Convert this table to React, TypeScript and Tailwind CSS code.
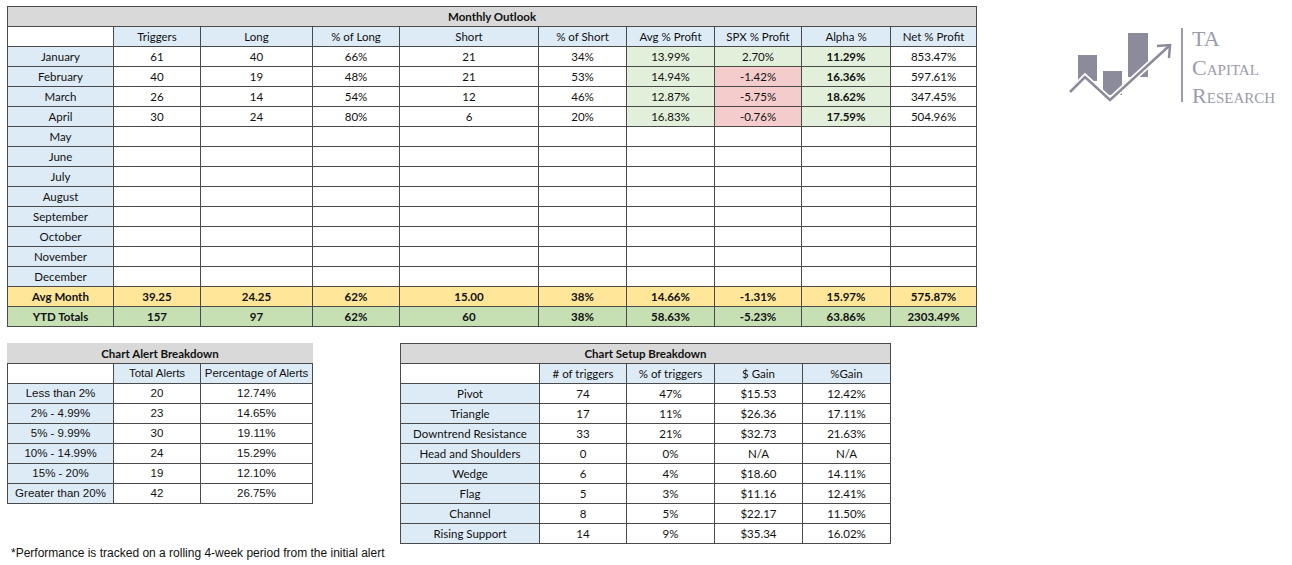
import React from "react";

type Row = {
  label: string;
  cells: string[];
};

const months: Row[] = [
  { label: "January", cells: ["61", "40", "66%", "21", "34%", "13.99%", "2.70%", "11.29%", "853.47%"] },
  { label: "February", cells: ["40", "19", "48%", "21", "53%", "14.94%", "-1.42%", "16.36%", "597.61%"] },
  { label: "March", cells: ["26", "14", "54%", "12", "46%", "12.87%", "-5.75%", "18.62%", "347.45%"] },
  { label: "April", cells: ["30", "24", "80%", "6", "20%", "16.83%", "-0.76%", "17.59%", "504.96%"] },
  { label: "May", cells: [] },
  { label: "June", cells: [] },
  { label: "July", cells: [] },
  { label: "August", cells: [] },
  { label: "September", cells: [] },
  { label: "October", cells: [] },
  { label: "November", cells: [] },
  { label: "December", cells: [] },
];

const monthHeaders = ["Triggers", "Long", "% of Long", "Short", "% of Short", "Avg % Profit", "SPX % Profit", "Alpha %", "Net % Profit"];
const monthWidths = [106, 87, 112, 87, 139, 88, 88, 87, 89, 86];

const avgRow = ["39.25", "24.25", "62%", "15.00", "38%", "14.66%", "-1.31%", "15.97%", "575.87%"];
const ytdRow = ["157", "97", "62%", "60", "38%", "58.63%", "-5.23%", "63.86%", "2303.49%"];

const alerts: Row[] = [
  { label: "Less than 2%", cells: ["20", "12.74%"] },
  { label: "2% - 4.99%", cells: ["23", "14.65%"] },
  { label: "5% - 9.99%", cells: ["30", "19.11%"] },
  { label: "10% - 14.99%", cells: ["24", "15.29%"] },
  { label: "15% - 20%", cells: ["19", "12.10%"] },
  { label: "Greater than 20%", cells: ["42", "26.75%"] },
];

const setups: Row[] = [
  { label: "Pivot", cells: ["74", "47%", "$15.53", "12.42%"] },
  { label: "Triangle", cells: ["17", "11%", "$26.36", "17.11%"] },
  { label: "Downtrend Resistance", cells: ["33", "21%", "$32.73", "21.63%"] },
  { label: "Head and Shoulders", cells: ["0", "0%", "N/A", "N/A"] },
  { label: "Wedge", cells: ["6", "4%", "$18.60", "14.11%"] },
  { label: "Flag", cells: ["5", "3%", "$11.16", "12.41%"] },
  { label: "Channel", cells: ["8", "5%", "$22.17", "11.50%"] },
  { label: "Rising Support", cells: ["14", "9%", "$35.34", "16.02%"] },
];

const cellBase = "h-[20px] p-0 border border-[#4a4a4a] text-center align-middle leading-none whitespace-nowrap";
const blue = "bg-[#ddebf7]";

// colour of a filled monthly cell, by column index
function monthCellClass(col: number, value: string) {
  if (!value) return "bg-white";
  if (col === 5) return "bg-[#e2efda]";
  if (col === 6) return value.startsWith("-") ? "bg-[#f4cccc]" : "bg-[#e2efda]";
  if (col === 7) return "bg-[#e2efda] font-bold";
  return "bg-white";
}

function MonthlyOutlook() {
  return (
    <table className="table-fixed border-collapse border border-[#2e2e2e] font-[Lato,'Open_Sans',sans-serif] text-[11.5px] text-[#111]" style={{ width: 970 }}>
      <colgroup>
        {monthWidths.map((w, i) => (
          <col key={i} style={{ width: w }} />
        ))}
      </colgroup>
      <tbody>
        <tr>
          <td colSpan={10} className={`${cellBase} bg-[#d9d9d9] font-bold`}>
            Monthly Outlook
          </td>
        </tr>
        <tr>
          <td className={`${cellBase} bg-white`}></td>
          {monthHeaders.map((h) => (
            <td key={h} className={`${cellBase} ${blue}`}>
              {h}
            </td>
          ))}
        </tr>
        {months.map((m) => (
          <tr key={m.label}>
            <td className={`${cellBase} ${blue}`}>{m.label}</td>
            {monthHeaders.map((_, i) => {
              const v = m.cells[i] ?? "";
              return (
                <td key={i} className={`${cellBase} ${monthCellClass(i, v)}`}>
                  {v}
                </td>
              );
            })}
          </tr>
        ))}
        <tr className="bg-[#ffe699] font-bold">
          <td className={cellBase}>Avg Month</td>
          {avgRow.map((v, i) => (
            <td key={i} className={cellBase}>
              {v}
            </td>
          ))}
        </tr>
        <tr className="bg-[#c6e0b4] font-bold">
          <td className={cellBase}>YTD Totals</td>
          {ytdRow.map((v, i) => (
            <td key={i} className={cellBase}>
              {v}
            </td>
          ))}
        </tr>
      </tbody>
    </table>
  );
}

function AlertBreakdown() {
  return (
    <table className="table-fixed border-collapse border border-[#2e2e2e] font-['Liberation_Sans',Arial,sans-serif] text-[11.5px] text-[#111]" style={{ width: 305 }}>
      <colgroup>
        <col style={{ width: 106 }} />
        <col style={{ width: 87 }} />
        <col style={{ width: 112 }} />
      </colgroup>
      <tbody>
        <tr>
          <td colSpan={3} className={`${cellBase} bg-[#d9d9d9] font-bold font-[Lato,sans-serif] border-t-[#d9d9d9] border-x-[#d9d9d9]`}>
            Chart Alert Breakdown
          </td>
        </tr>
        <tr>
          <td className={`${cellBase} bg-white`}></td>
          <td className={`${cellBase} ${blue}`}>Total Alerts</td>
          <td className={`${cellBase} ${blue}`}>Percentage of Alerts</td>
        </tr>
        {alerts.map((r) => (
          <tr key={r.label}>
            <td className={`${cellBase} ${blue}`}>{r.label}</td>
            {r.cells.map((v, i) => (
              <td key={i} className={`${cellBase} bg-white`}>
                {v}
              </td>
            ))}
          </tr>
        ))}
      </tbody>
    </table>
  );
}

function SetupBreakdown() {
  return (
    <table className="table-fixed border-collapse border border-[#2e2e2e] font-[Lato,'Open_Sans',sans-serif] text-[11.5px] text-[#111]" style={{ width: 490 }}>
      <colgroup>
        <col style={{ width: 139 }} />
        <col style={{ width: 87 }} />
        <col style={{ width: 88 }} />
        <col style={{ width: 88 }} />
        <col style={{ width: 88 }} />
      </colgroup>
      <tbody>
        <tr>
          <td colSpan={5} className={`${cellBase} bg-[#d9d9d9] font-bold`}>
            Chart Setup Breakdown
          </td>
        </tr>
        <tr>
          <td className={`${cellBase} bg-white`}></td>
          <td className={`${cellBase} ${blue}`}># of triggers</td>
          <td className={`${cellBase} ${blue}`}>% of triggers</td>
          <td className={`${cellBase} ${blue}`}>$ Gain</td>
          <td className={`${cellBase} ${blue}`}>%Gain</td>
        </tr>
        {setups.map((r) => (
          <tr key={r.label}>
            <td className={`${cellBase} ${blue}`}>{r.label}</td>
            {r.cells.map((v, i) => (
              <td key={i} className={`${cellBase} bg-white`}>
                {v}
              </td>
            ))}
          </tr>
        ))}
      </tbody>
    </table>
  );
}

function Logo() {
  return (
    <div className="flex items-start">
      <svg width="112" height="80" viewBox="0 0 112 80" className="mt-[27px]">
        <rect x="11" y="22" width="19" height="26" fill="#8b8b9b" />
        <rect x="36" y="38" width="19" height="24" fill="#8b8b9b" />
        <rect x="61" y="0" width="20" height="44" fill="#8b8b9b" />
        <polyline points="3,59 18,44 43,67 102,13" fill="none" stroke="#ffffff" strokeWidth="6" />
        <polyline points="3,59 18,44 43,67 102,13" fill="none" stroke="#8b8b9b" strokeWidth="2.5" />
        <polyline points="90,13 103,12 102,25" fill="none" stroke="#8b8b9b" strokeWidth="2.5" />
      </svg>
      <div className="ml-[2px] mt-[22px] h-[74px] w-[2px] bg-[#9b9bab]" />
      <div className="ml-[9px] mt-[19px] flex flex-col font-['Liberation_Serif',serif] text-[22px] leading-[28.5px] text-[#9b9bab] [font-variant:small-caps]">
        <span>TA</span>
        <span>Capital</span>
        <span>Research</span>
      </div>
    </div>
  );
}

export default function App() {
  return (
    <div className="w-[1292px] h-[565px] bg-white pl-[7px] pt-[6px]">
      <div className="flex items-start">
        <MonthlyOutlook />
        <div className="ml-[90px]">
          <Logo />
        </div>
      </div>
      <div className="mt-[16px] flex items-start">
        <AlertBreakdown />
        <div className="ml-[87px]">
          <SetupBreakdown />
        </div>
      </div>
      <p className="mt-0 ml-[4px] font-['Liberation_Sans',Arial,sans-serif] text-[12px] text-[#111]">
        *Performance is tracked on a rolling 4-week period from the initial alert
      </p>
    </div>
  );
}
